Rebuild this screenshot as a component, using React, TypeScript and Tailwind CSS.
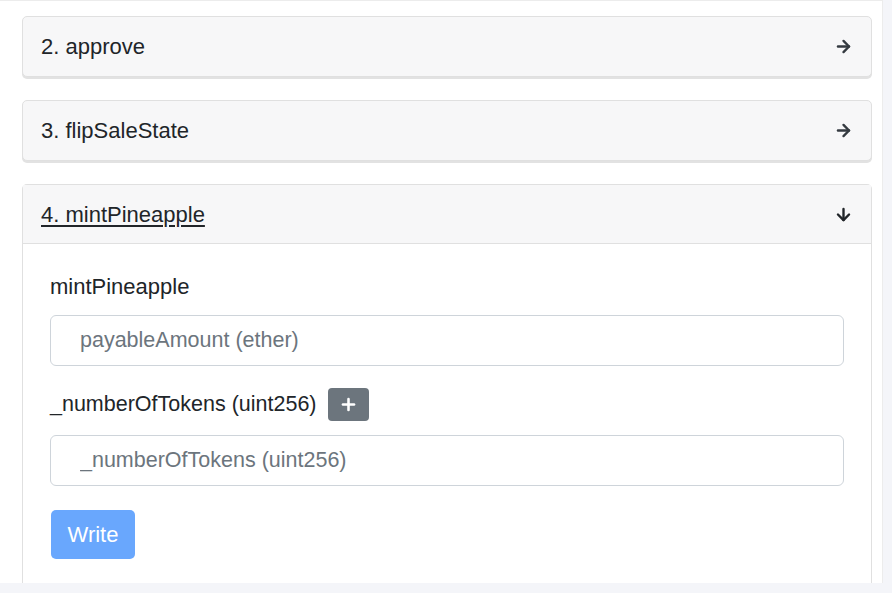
import { ArrowRight, ArrowDown, Plus } from "lucide-react";

interface FnItem {
  readonly index: number;
  readonly name: string;
}

const collapsed: readonly FnItem[] = [
  { index: 2, name: "approve" },
  { index: 3, name: "flipSaleState" },
];

function CollapsedCard({ index, name }: FnItem) {
  return (
    <div className="mb-[23px] rounded-[5px] border border-[#e0e0e0] bg-[#f7f7f8] shadow-[0_2px_0_#e2e2e2]">
      <div className="flex h-[59px] items-center justify-between pl-[18px] pr-[18px]">
        <span className="text-[22px] text-[#212529]">
          {index}. {name}
        </span>
        <ArrowRight className="h-[19px] w-[19px] text-[#343a40]" strokeWidth={3} />
      </div>
    </div>
  );
}

export default function App() {
  return (
    <div
      className="min-h-[593px] bg-[#f4f5f9]"
      style={{ fontFamily: '"Liberation Sans", Arial, sans-serif' }}
    >
      <div className="h-[583px] w-[883px] overflow-hidden border-r border-t border-[#ececec] bg-white pl-[22px] pr-[10px] pt-[15px]">
        {collapsed.map((item) => (
          <CollapsedCard key={item.index} index={item.index} name={item.name} />
        ))}

        <div className="h-[420px] rounded-t-[5px] border border-b-0 border-[#e0e0e0] bg-white">
          <div className="flex h-[59px] items-center justify-between border-b border-[#e0e0e0] bg-[#f7f7f8] pl-[18px] pr-[18px]">
            <span className="text-[22px] text-[#212529] underline underline-offset-[3px]">
              4. mintPineapple
            </span>
            <ArrowDown className="h-[19px] w-[19px] text-[#212529]" strokeWidth={3} />
          </div>

          <div className="pl-[27px] pr-[27px] pt-[31px]">
            <div className="mb-[16px] text-[22px] leading-[24px] text-[#212529]">mintPineapple</div>
            <input
              className="block h-[51px] w-full rounded-[6px] border border-[#ced4da] bg-white pl-[29px] text-[21.5px] text-[#495057] placeholder:text-[#6c757d] outline-none"
              placeholder="payableAmount (ether)"
            />

            <div className="mt-[22px] flex items-center gap-[11px]">
              <span className="text-[21.5px] text-[#212529]">_numberOfTokens (uint256)</span>
              <button className="flex h-[33px] w-[41px] items-center justify-center rounded-[4px] bg-[#6c757d] text-white">
                <Plus className="h-[19px] w-[19px]" strokeWidth={3.25} />
              </button>
            </div>

            <input
              className="mt-[14px] block h-[51px] w-full rounded-[6px] border border-[#ced4da] bg-white pl-[29px] text-[21.5px] text-[#495057] placeholder:text-[#6c757d] outline-none"
              placeholder="_numberOfTokens (uint256)"
            />

            <button className="mt-[24px] ml-px h-[49px] w-[84px] rounded-[5px] bg-[#69a7fd] text-[22px] text-white">
              Write
            </button>
          </div>
        </div>
      </div>
    </div>
  );
}
